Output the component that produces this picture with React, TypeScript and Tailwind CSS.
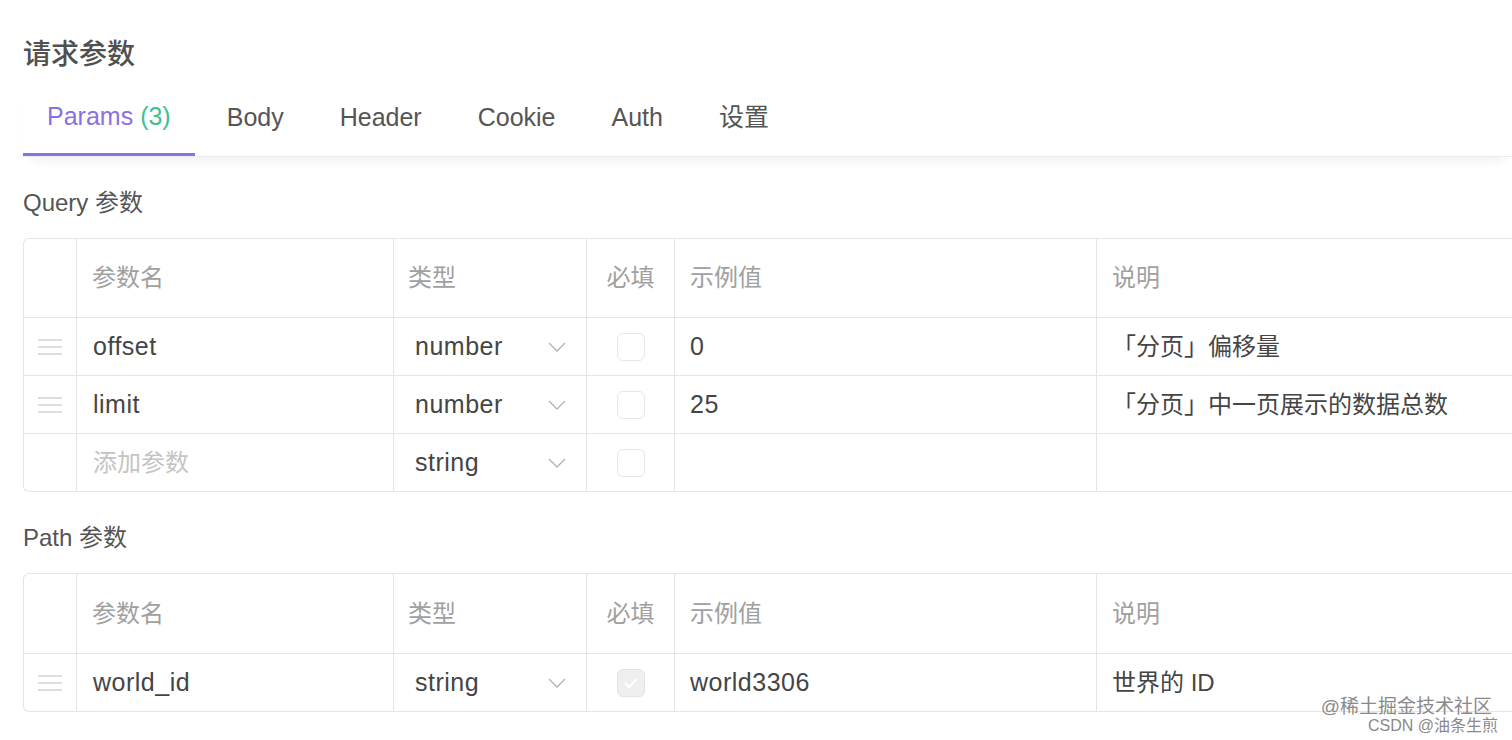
import React from "react";

type Row = {
  name: string;
  type: string;
  required?: boolean;
  example?: string;
  desc?: string;
  placeholder?: boolean;
};

const queryRows: Row[] = [
  { name: "offset", type: "number", example: "0", desc: "「分页」偏移量" },
  { name: "limit", type: "number", example: "25", desc: "「分页」中一页展示的数据总数" },
  { name: "添加参数", type: "string", placeholder: true },
];

const pathRows: Row[] = [
  { name: "world_id", type: "string", required: true, example: "world3306", desc: "世界的 ID" },
];

const tabs = ["Body", "Header", "Cookie", "Auth", "设置"];

const gridCols = "grid grid-cols-[53px_317px_193px_88px_422px_1fr]";

const DragHandle = () => (
  <div className="flex flex-col gap-[5px]">
    <span className="block w-[24px] h-[2px] bg-[#dedede]" />
    <span className="block w-[24px] h-[2px] bg-[#dedede]" />
    <span className="block w-[24px] h-[2px] bg-[#dedede]" />
  </div>
);

const Chevron = () => (
  <svg width="18" height="10" viewBox="0 0 18 10" fill="none">
    <path d="M1 1l8 8 8-8" stroke="#b3b3b3" strokeWidth="1.3" />
  </svg>
);

const Checkbox = ({ checked }: { checked?: boolean }) =>
  checked ? (
    <div className="w-[28px] h-[28px] rounded-[6px] border border-[#e3e3e3] bg-[#efefef] flex items-center justify-center">
      <svg width="16" height="12" viewBox="0 0 16 12" fill="none">
        <path d="M2 6l4 4 8-8" stroke="#ffffff" strokeWidth="2" />
      </svg>
    </div>
  ) : (
    <div className="w-[28px] h-[28px] rounded-[6px] border border-[#e6e6e6] bg-white" />
  );

const ParamTable = ({ rows, headerH }: { rows: Row[]; headerH: string }) => (
  <div className="border-l border-t border-b border-[#e5e5e5] rounded-l-[6px] text-[24px]">
    <div className={`${gridCols} ${headerH} text-[#a0a0a0]`}>
      <div className="border-r border-[#e5e5e5]" />
      <div className="border-r border-[#e5e5e5] flex items-center pl-[15px]">参数名</div>
      <div className="border-r border-[#e5e5e5] flex items-center pl-[14px]">类型</div>
      <div className="border-r border-[#e5e5e5] flex items-center justify-center">必填</div>
      <div className="border-r border-[#e5e5e5] flex items-center pl-[15px]">示例值</div>
      <div className="flex items-center pl-[15px]">说明</div>
    </div>
    {rows.map((r) => (
      <div
        key={r.name}
        className={`${gridCols} h-[58px] border-t border-[#e5e5e5] text-[#454545] text-[25px] tracking-[0.02em]`}
      >
        <div className="border-r border-[#e5e5e5] flex items-center justify-center">
          {!r.placeholder && <DragHandle />}
        </div>
        <div
          className={`border-r border-[#e5e5e5] flex items-center pl-[16px] ${
            r.placeholder ? "text-[#c4c4c4] text-[24px] tracking-normal" : ""
          }`}
        >
          {r.name}
        </div>
        <div className="border-r border-[#e5e5e5] flex items-center justify-between pl-[21px] pr-[20px]">
          <span>{r.type}</span>
          <Chevron />
        </div>
        <div className="border-r border-[#e5e5e5] flex items-center justify-center">
          <Checkbox checked={r.required} />
        </div>
        <div className="border-r border-[#e5e5e5] flex items-center pl-[15px]">{r.example}</div>
        <div className="flex items-center pl-[15px] text-[24px] tracking-normal">{r.desc}</div>
      </div>
    ))}
  </div>
);

export default function App() {
  return (
    <div
      className="relative w-[1512px] h-[740px] overflow-hidden bg-white pl-[23px] pt-[37px]"
      style={{ fontFamily: '"Liberation Sans", "Noto Sans CJK SC", sans-serif' }}
    >
      <h2 className="text-[28px] leading-[36px] font-medium text-[#505050]">请求参数</h2>

      {/* tabs */}
      <div className="mt-[7px] flex gap-[8px] border-b border-[#ececec] shadow-[0_10px_12px_-8px_rgba(0,0,0,0.08)] text-[25px]">
        <div className="h-[76px] flex items-center px-[24px] border-b-[3px] border-[#8e6fe2] -mb-px">
          <span className="text-[#8e6fe2]">Params</span>
          <span className="text-[#3fbf93] ml-[7px]">(3)</span>
        </div>
        {tabs.map((t) => (
          <div key={t} className="h-[76px] flex items-center px-[24px] text-[#555]">
            {t}
          </div>
        ))}
      </div>

      <div className="mt-[31px] text-[24px] leading-[30px] text-[#555]">Query 参数</div>
      <div className="mt-[20px]">
        <ParamTable rows={queryRows} headerH="h-[78px]" />
      </div>

      <div className="mt-[31px] text-[24px] leading-[30px] text-[#555]">Path 参数</div>
      <div className="mt-[20px]">
        <ParamTable rows={pathRows} headerH="h-[79px]" />
      </div>

      {/* watermark */}
      <div className="absolute right-[14px] bottom-[6px] flex flex-col items-end text-[#8a8a8a] leading-none">
        <span className="text-[19px] mr-[6px]">@稀土掘金技术社区</span>
        <span className="text-[16px] mt-[2px]">CSDN @油条生煎</span>
      </div>
    </div>
  );
}
